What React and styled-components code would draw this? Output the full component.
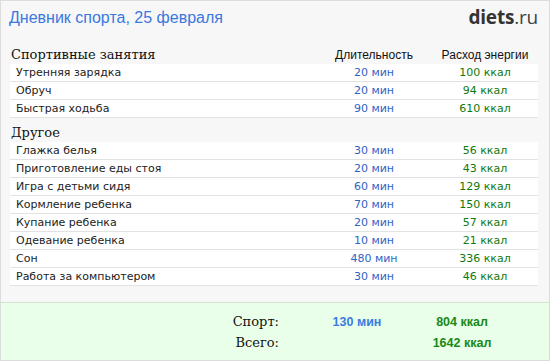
import React from "react";
import styled, { createGlobalStyle } from "styled-components";

const Global = createGlobalStyle`
  html, body { margin: 0; padding: 0; background: #fff; }
  * { box-sizing: border-box; }
`;

const Card = styled.div`
  width: 550px;
  height: 361px;
  border: 1px solid #dcdcdc;
  background: #f7f7f7;
  display: flex;
  flex-direction: column;
  overflow: hidden;
`;

const Header = styled.div`
  height: 45px;
  display: flex;
  align-items: flex-start;
  justify-content: space-between;
  padding: 7px 11px 0 8px;
`;

const Title = styled.div`
  font-family: "Liberation Sans", Arial, sans-serif;
  font-weight: 400;
  font-size: 16px;
  color: #3b78e0;
  line-height: 20px;
`;

const Logo = styled.div`
  font-family: "Open Sans", "DejaVu Sans", sans-serif;
  font-size: 19px;
  line-height: 20px;
  color: #333;
  margin-top: -1px;
  letter-spacing: -0.2px;
  b { font-weight: 700; }
  span { font-weight: 400; color: #444; }
`;

const Content = styled.div`
  padding: 0 11px 0 9px;
  display: flex;
  flex-direction: column;
`;

const Section = styled.div`
  margin-top: ${(p) => (p.$first ? "0" : "6px")};
`;

const Grid = styled.div`
  display: grid;
  grid-template-columns: 305px 118px 104px;
  align-items: center;
`;

const HeadRow = styled(Grid)`
  height: 18px;
`;

const SectionTitle = styled.div`
  font-family: "DejaVu Serif", "Liberation Serif", serif;
  font-size: 13px;
  color: #111;
  padding-left: 1px;
  line-height: 18px;
`;

const ColTitle = styled.div`
  font-family: "Liberation Sans", Arial, sans-serif;
  font-size: 12px;
  color: #111;
  text-align: center;
  line-height: 18px;
`;

const Row = styled(Grid)`
  height: 18px;
  background: #fff;
  border-bottom: 1px solid #e2e2e2;
  font-family: "DejaVu Sans", Verdana, sans-serif;
  font-size: 11px;
  line-height: 17px;
`;

const Name = styled.div`
  padding-left: 6px;
  color: #222;
`;

const Value = styled.div`
  text-align: center;
  color: ${(p) => p.$color};
`;

const Footer = styled.div`
  margin-top: 16px;
  flex: 1;
  background: #eaffea;
  border-top: 1px solid #d3e3d3;
  padding-top: 8px;
`;

const TotalRow = styled.div`
  display: grid;
  grid-template-columns: 278px 20px 116px 94px;
  align-items: center;
  height: 21px;
`;

const TotalLabel = styled.div`
  font-family: "DejaVu Serif", "Liberation Serif", serif;
  font-size: 13px;
  color: #111;
  text-align: right;
`;

const TotalValue = styled.div`
  grid-column: ${(p) => p.$col};
  font-family: "Liberation Sans", Arial, sans-serif;
  font-weight: 700;
  font-size: 12.5px;
  text-align: center;
  color: ${(p) => p.$color};
`;

const BLUE = "#3063c6";
const GREEN = "#0f7a0f";

const sport = [
  ["Утренняя зарядка", "20 мин", "100 ккал"],
  ["Обруч", "20 мин", "94 ккал"],
  ["Быстрая ходьба", "90 мин", "610 ккал"],
];

const other = [
  ["Глажка белья", "30 мин", "56 ккал"],
  ["Приготовление еды стоя", "20 мин", "43 ккал"],
  ["Игра с детьми сидя", "60 мин", "129 ккал"],
  ["Кормление ребенка", "70 мин", "150 ккал"],
  ["Купание ребенка", "20 мин", "57 ккал"],
  ["Одевание ребенка", "10 мин", "21 ккал"],
  ["Сон", "480 мин", "336 ккал"],
  ["Работа за компьютером", "30 мин", "46 ккал"],
];

function Rows({ items }) {
  return items.map(([n, d, e]) => (
    <Row key={n}>
      <Name>{n}</Name>
      <Value $color={BLUE}>{d}</Value>
      <Value $color={GREEN}>{e}</Value>
    </Row>
  ));
}

export default function App() {
  return (
    <>
      <Global />
      <Card>
        <Header>
          <Title>Дневник спорта, 25 февраля</Title>
          <Logo>
            <b>diets</b>
            <span>.ru</span>
          </Logo>
        </Header>
        <Content>
          <Section $first>
            <HeadRow>
              <SectionTitle>Спортивные занятия</SectionTitle>
              <ColTitle>Длительность</ColTitle>
              <ColTitle>Расход энергии</ColTitle>
            </HeadRow>
            <Rows items={sport} />
          </Section>
          <Section>
            <HeadRow>
              <SectionTitle>Другое</SectionTitle>
            </HeadRow>
            <Rows items={other} />
          </Section>
        </Content>
        <Footer>
          <TotalRow>
            <TotalLabel>Спорт:</TotalLabel>
            <TotalValue $col={3} $color="#3a7be0">130 мин</TotalValue>
            <TotalValue $col={4} $color="#178a17">804 ккал</TotalValue>
          </TotalRow>
          <TotalRow>
            <TotalLabel>Всего:</TotalLabel>
            <TotalValue $col={4} $color="#178a17">1642 ккал</TotalValue>
          </TotalRow>
        </Footer>
      </Card>
    </>
  );
}
